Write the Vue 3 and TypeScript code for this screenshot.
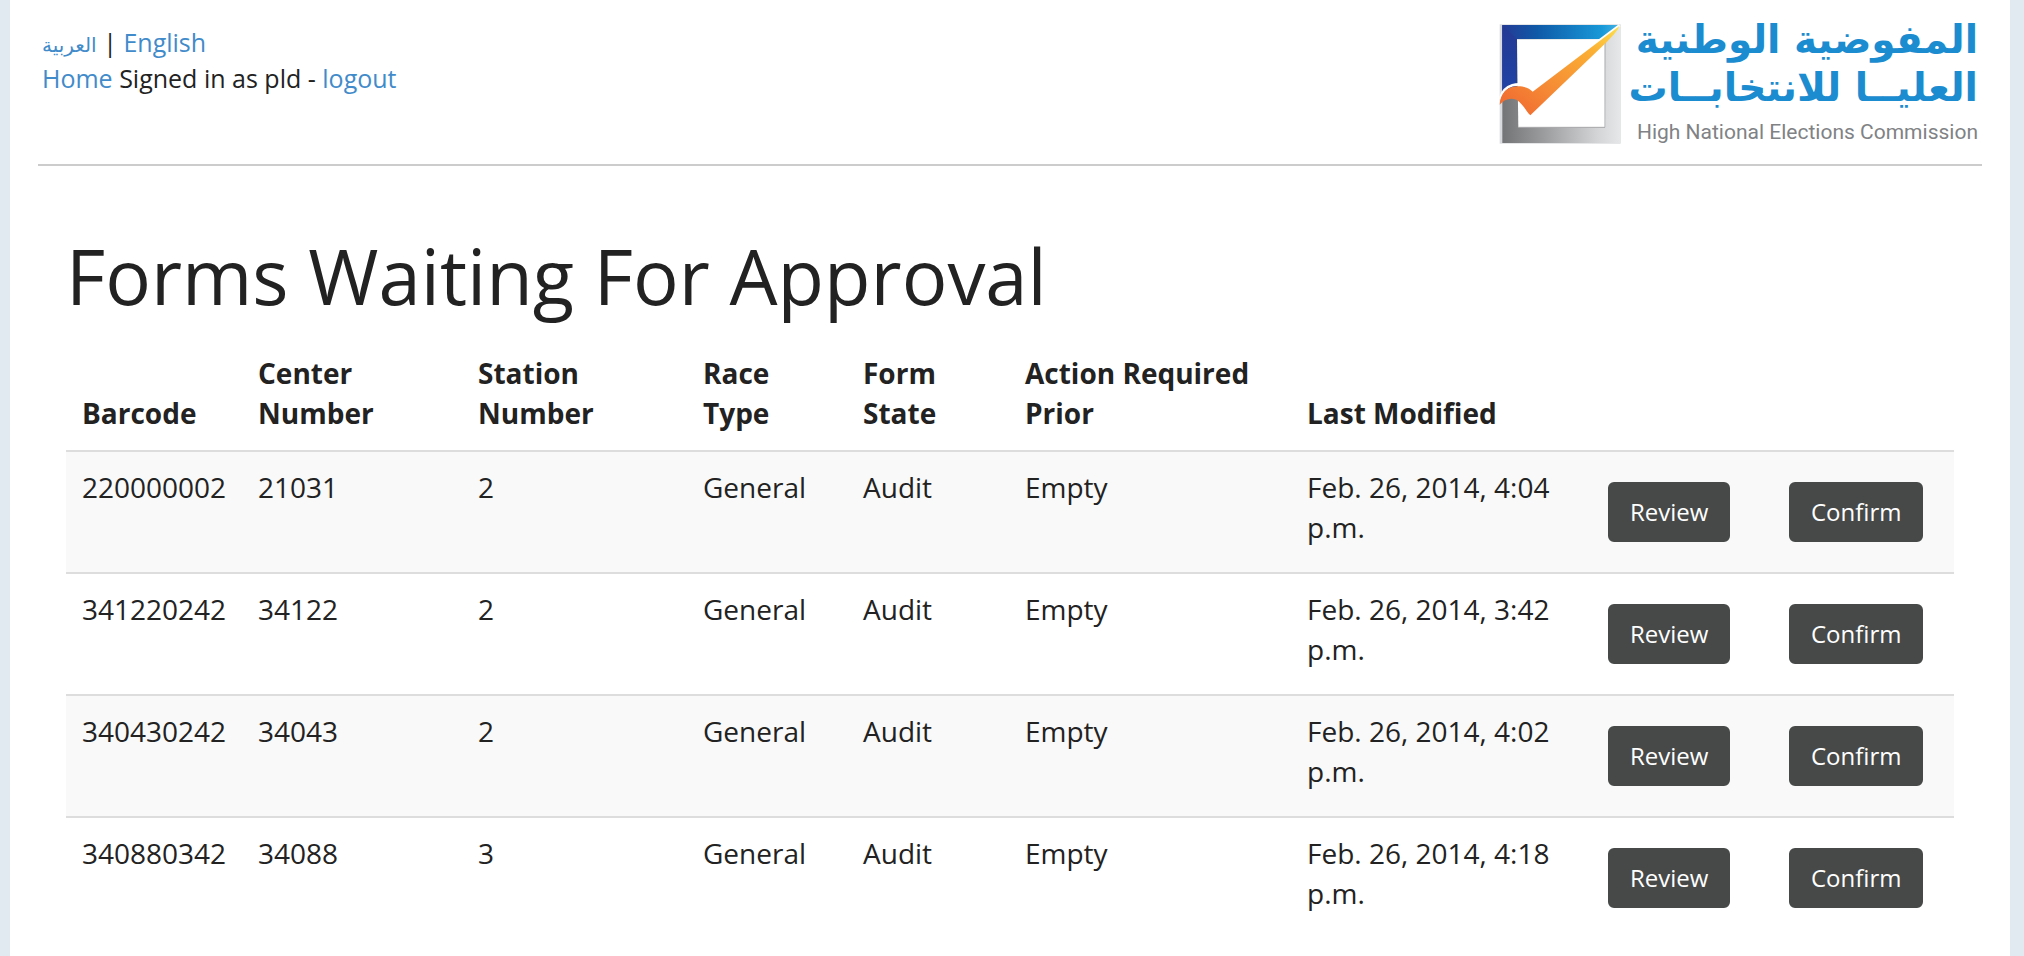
<script setup lang="ts">
interface FormRow {
  barcode: string
  center: string
  station: string
  race: string
  state: string
  prior: string
  modified: string
}

const columns: string[] = [
  'Barcode',
  'Center Number',
  'Station Number',
  'Race Type',
  'Form State',
  'Action Required Prior',
  'Last Modified',
]

const rows: FormRow[] = [
  { barcode: '220000002', center: '21031', station: '2', race: 'General', state: 'Audit', prior: 'Empty', modified: 'Feb. 26, 2014, 4:04 p.m.' },
  { barcode: '341220242', center: '34122', station: '2', race: 'General', state: 'Audit', prior: 'Empty', modified: 'Feb. 26, 2014, 3:42 p.m.' },
  { barcode: '340430242', center: '34043', station: '2', race: 'General', state: 'Audit', prior: 'Empty', modified: 'Feb. 26, 2014, 4:02 p.m.' },
  { barcode: '340880342', center: '34088', station: '3', race: 'General', state: 'Audit', prior: 'Empty', modified: 'Feb. 26, 2014, 4:18 p.m.' },
]
</script>

<template>
  <div class="page">
    <header class="header">
      <nav class="nav">
        <div><a href="#" class="arabic" lang="ar">العربية</a> | <a href="#">English</a></div>
        <div><a href="#">Home</a> Signed in as pld - <a href="#">logout</a></div>
      </nav>
      <div class="brand">
        <svg class="mark" viewBox="0 0 366 360" aria-hidden="true">
          <defs>
            <linearGradient id="blue" x1="0" y1="0" x2="1" y2="0">
              <stop offset="0" stop-color="#243a94" />
              <stop offset="0.3" stop-color="#0f5aa8" />
              <stop offset="0.85" stop-color="#1899d8" />
              <stop offset="1" stop-color="#45b4e6" />
            </linearGradient>
            <linearGradient id="grey" x1="0" y1="0" x2="1" y2="0">
              <stop offset="0" stop-color="#737476" />
              <stop offset="0.35" stop-color="#9b9c9e" />
              <stop offset="0.8" stop-color="#d3d4d5" />
              <stop offset="1" stop-color="#e6e7e8" />
            </linearGradient>
            <linearGradient id="tick" x1="0" y1="1" x2="1" y2="0">
              <stop offset="0" stop-color="#f0642f" />
              <stop offset="0.35" stop-color="#f58a35" />
              <stop offset="0.75" stop-color="#fbb034" />
              <stop offset="1" stop-color="#fde24f" />
            </linearGradient>
            <linearGradient id="side" x1="0" y1="0" x2="0" y2="1">
              <stop offset="0" stop-color="#243a94" />
              <stop offset="1" stop-color="#1f44a6" />
            </linearGradient>
          </defs>
          <rect x="2" y="1" width="363" height="358" fill="#d9dadd" />
          <rect x="10" y="3" width="354" height="354" fill="url(#grey)" />
          <path d="M10 3H362L318 45H54V216H10Z" fill="url(#blue)" />
          <path d="M10 3L54 45V216H10Z" fill="url(#side)" />
          <path d="M54 46H318L320 310H58Z" fill="#fff" />
          <path d="M318 48V310H58" fill="none" stroke="#a6a7aa" stroke-width="3" />
          <path d="M3 226C8 204 20 190 40 184C62 178 86 182 101 199L362 4" fill="none" stroke="#fff" stroke-width="8" />
          <path d="M2 242C4 208 24 188 52 187C75 186 91 192 101 203L362 5C354 23 336 40 324 53L94 274C82 263 72 240 54 228C34 219 16 226 2 242Z" fill="url(#tick)" />
        </svg>
        <div class="wordmark">
          <div class="brand-ar" lang="ar" dir="rtl">المفوضية الوطنية</div>
          <div class="brand-ar" lang="ar" dir="rtl">العليــا للانتخابــات</div>
          <div class="brand-en">High National Elections Commission</div>
        </div>
      </div>
    </header>

    <main class="main">
      <h1>Forms Waiting For Approval</h1>
      <table>
        <colgroup>
          <col class="c-barcode" />
          <col class="c-center" />
          <col class="c-station" />
          <col class="c-race" />
          <col class="c-state" />
          <col class="c-prior" />
          <col class="c-modified" />
          <col class="c-action" />
          <col class="c-action" />
        </colgroup>
        <thead>
          <tr>
            <th v-for="c in columns" :key="c" scope="col">{{ c }}</th>
            <td></td>
            <td></td>
          </tr>
        </thead>
        <tbody>
          <tr v-for="r in rows" :key="r.barcode">
            <td>{{ r.barcode }}</td>
            <td>{{ r.center }}</td>
            <td>{{ r.station }}</td>
            <td>{{ r.race }}</td>
            <td>{{ r.state }}</td>
            <td>{{ r.prior }}</td>
            <td>{{ r.modified }}</td>
            <td><button type="button">Review</button></td>
            <td><button type="button">Confirm</button></td>
          </tr>
        </tbody>
      </table>
    </main>
  </div>
</template>

<style>
body {
  background: #e2eaf1;
}
</style>

<style scoped>
.page {
  box-sizing: border-box;
  min-height: 100vh;
  margin: 0 14px 0 10px;
  padding: 0 28px;
  background: #fff;
  color: #222;
  font-family: "Open Sans", "DejaVu Sans", sans-serif;
  font-size: 28px;
  line-height: 40px;
}

.header {
  display: flex;
  justify-content: space-between;
  align-items: flex-start;
  padding: 16px 4px 12px;
  border-bottom: 2px solid #ccc;
}

.nav {
  padding-top: 8px;
  font-size: 25px;
  line-height: 36px;
}

a {
  color: #428bca;
  text-decoration: none;
}

.arabic {
  font-family: "DejaVu Sans", sans-serif;
  font-size: 20px;
  line-height: 1;
}

.brand {
  display: flex;
  gap: 8px;
}

.mark {
  width: 122px;
  height: 120px;
  margin-top: 8px;
}

.wordmark {
  display: flex;
  flex-direction: column;
  white-space: nowrap;
}

.brand-ar {
  color: #1b8ccf;
  font-family: "DejaVu Sans", sans-serif;
  font-size: 39px;
  font-weight: 700;
  line-height: 48px;
}

.brand-en {
  color: #808285;
  font-family: Roboto, "Liberation Sans", sans-serif;
  font-size: 21px;
  line-height: 40px;
  text-align: right;
}

.main {
  padding: 68px 28px 0;
}

h1 {
  margin: 0 0 20px;
  font-size: 76px;
  font-weight: 400;
  line-height: 84px;
}

table {
  width: 100%;
  table-layout: fixed;
  border-collapse: separate;
  border-spacing: 0;
}

.c-barcode { width: 176px; }
.c-center { width: 220px; }
.c-station { width: 225px; }
.c-race { width: 160px; }
.c-state { width: 162px; }
.c-prior { width: 282px; }
.c-modified { width: 301px; }
.c-action { width: 181px; }

th,
td {
  padding: 15px 16px 17px;
  text-align: left;
  vertical-align: top;
}

th {
  font-weight: 700;
  vertical-align: bottom;
}

tbody td {
  border-top: 2px solid #ddd;
}

tbody tr:nth-child(odd) td {
  background: #f9f9f9;
}

button {
  display: block;
  margin: 15px 0 13px;
  padding: 12px 20px;
  border: 2px solid #474949;
  border-radius: 6px;
  background: #474949;
  color: #fff;
  font-family: inherit;
  font-size: 24px;
  line-height: 32px;
  white-space: nowrap;
}
</style>
